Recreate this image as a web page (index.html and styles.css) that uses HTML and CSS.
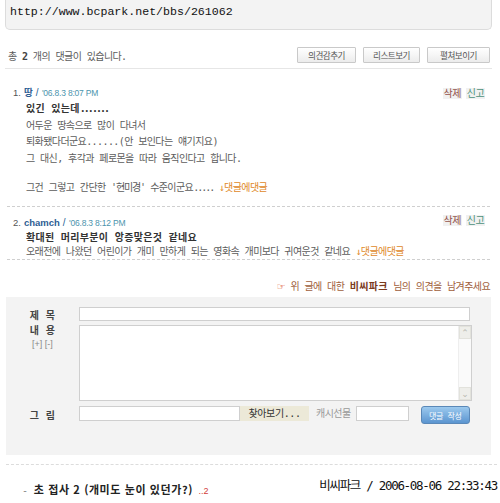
FILE: index.html
```html
<!DOCTYPE html>
<html lang="ko">
<head>
  <meta charset="UTF-8" />
  <title>댓글</title>
  <link rel="stylesheet" href="styles.css">
</head>
<body>
  <!-- 글 주소 -->
  <div class="urlbox">http://www.bcpark.net/bbs/261062</div>

  <div class="toolbar">
    <p class="count">총 <b>2</b> 개의 댓글이 있습니다.</p>
    <div class="btns">
      <button class="btn">의견감추기</button>
      <button class="btn">리스트보기</button>
      <button class="btn">펼쳐보이기</button>
    </div>
  </div>

  <ul class="comments">
    <li class="comment first">
      <div class="c-head">
        <span class="num">1.</span>
        <b class="nick">땅</b>
        <span class="slash">/</span>
        <span class="date">'06.8.3 8:07 PM</span>
        <span class="tools"><a class="del">삭제</a><a class="rep">신고</a></span>
      </div>
      <div class="c-body">
        <p class="c-title">있긴 있는데<span class="dots">.......</span></p>
        <p>어두운 땅속으로 많이 다녀서</p>
        <p>퇴화됐다더군요......(안 보인다는 얘기지요)</p>
        <p>그 대신, 후각과 페로몬을 따라 움직인다고 합니다.</p>
        <p class="blank"></p>
        <p>그건 그렇고 간단한 <span class="quote">'현미경'</span> 수준이군요<span class="dots">.....</span> <a class="reply">↓댓글에댓글</a></p>
      </div>
    </li>
    <li class="comment second">
      <div class="c-head">
        <span class="num">2.</span>
        <b class="nick">chamch</b>
        <span class="slash">/</span>
        <span class="date">'06.8.3 8:12 PM</span>
        <span class="tools"><a class="del">삭제</a><a class="rep">신고</a></span>
      </div>
      <div class="c-body">
        <p class="c-title">확대된 머리부분이 앙증맞은것 같네요</p>
        <p>오래전에 나왔던 어린이가 개미 만하게 되는 영화속 개미보다 귀여운것 같네요 <a class="reply">↓댓글에댓글</a></p>
      </div>
    </li>
  </ul>

  <p class="prompt"><span class="hand">☞</span> 위 글에 대한 <b>비씨파크</b> 님의 의견을 남겨주세요</p>

  <form class="write">
    <label class="lbl">제 목</label>
    <div class="field"><input type="text" class="in-title"></div>

    <label class="lbl lbl-top">내 용<span class="resize">[+] [-]</span></label>
    <div class="field">
      <div class="area">
        <div class="area-text"></div>
        <div class="scroll">
          <span class="arrow">&#8963;</span>
          <span class="arrow">&#8964;</span>
        </div>
      </div>
    </div>

    <label class="lbl">그 림</label>
    <div class="field file-row">
      <input type="text" class="in-file">
      <span class="browse">찾아보기...</span>
      <span class="gift">캐시선물</span>
      <input type="text" class="in-gift">
      <button type="button" class="submit">댓글 작성</button>
    </div>
  </form>

  <div class="related">
    <p class="rel-title"><span class="dash">-</span> <b>초 접사 2 (개미도 눈이 있던가?)</b> <span class="cnt">..2</span></p>
    <span class="stamp">비씨파크 / 2006-08-06 22:33:43</span>
  </div>
</body>
</html>
```

FILE: styles.css
```css
:root {
  --ko: "DejaVu Sans Mono", "Noto Sans CJK KR", sans-serif;
  --lat: "Liberation Sans", "Noto Sans CJK KR", sans-serif;
  --text: #5c5c5c;
  --dark: #333;
  --line: #e6e6e6;
  --blue: #2d5d93;
  --box: #f3f3f3;
}

* {
  box-sizing: border-box;
  margin: 0;
  padding: 0;
}

body {
  width: 500px;
  height: 503px;
  overflow: hidden;
  background: #fff;
  font-family: var(--ko);
  font-size: 10px;
  letter-spacing: -0.6px;
  color: var(--text);
  white-space: nowrap;
}

a { cursor: pointer; }

/* 글 주소 박스 */
.urlbox {
  margin: 0 8px 0 5px;
  height: 30px;
  padding: 4px 0 0 4px;
  line-height: 16px;
  background: var(--box);
  border: 1px solid #dcdcdc;
  border-top: none;
  border-radius: 0 0 5px 5px;
  font-family: "Liberation Mono", monospace;
  font-size: 11.6px;
  letter-spacing: 0;
  color: #111;
}

.toolbar {
  display: flex;
  justify-content: space-between;
  align-items: flex-end;
  margin: 17px 8px 0 5px;
  padding: 0 2px 5px 3px;
  border-bottom: 1px solid var(--line);
}

.count {
  line-height: 14px;
  margin-bottom: -1px;
}

.count b { color: #444; }

.btns {
  display: flex;
  gap: 7px;
}

.btn {
  height: 16px;
  padding: 0;
  font-family: var(--ko);
  font-size: 8.6px;
  letter-spacing: -0.5px;
  white-space: nowrap;
  color: #555;
  background: linear-gradient(#ffffff, #ececec);
  border: 1px solid #c9c9c9;
  border-radius: 1px;
}

.btn:nth-child(1) { width: 59px; }
.btn:nth-child(2) { width: 57px; }
.btn:nth-child(3) { width: 63px; }

/* 댓글 목록 */
.comments {
  list-style: none;
  margin: 0 10px 0 7px;
}

.comment { border-bottom: 1px dashed #cfcfcf; }
.comment.first { padding: 16px 0 10px 6px; }
.comment.second { padding: 8px 0 0 6px; }

.c-head {
  display: flex;
  align-items: center;
  gap: 3px;
  height: 16px;
  line-height: 16px;
}

.num {
  color: #555;
  font-family: var(--lat);
  font-size: 9.5px;
  letter-spacing: 0;
}

.nick {
  color: var(--blue);
  font-family: var(--lat);
  font-size: 9.5px;
  letter-spacing: 0;
}

.slash {
  color: var(--blue);
  font-family: var(--lat);
  font-size: 10px;
}

.date {
  color: #4b94ad;
  font-family: var(--lat);
  font-size: 8.5px;
  letter-spacing: -0.2px;
  margin-left: 1px;
}

.tools {
  margin-left: auto;
  display: flex;
  gap: 4px;
  margin-right: 5px;
}

.tools a {
  padding: 0 1px;
  background: #f1f1f1;
  line-height: 11px;
}

.comment.second .tools { margin-top: -5px; }

.del { color: #93534c; }
.rep { color: #4d927a; }

.c-body { padding-left: 13px; }

.first .c-body p { line-height: 16.5px; }
.first .c-body .blank { height: 12.5px; }
.second .c-body p { line-height: 14px; }

.c-title {
  font-weight: bold;
  color: var(--dark);
  letter-spacing: 0.3px;
}

.dots { letter-spacing: -2px; }
.quote { letter-spacing: -1.2px; }

.reply { color: #e0892a; }

.prompt {
  margin: 19px 10px 2px 0;
  text-align: right;
  line-height: 16px;
  color: #a0603c;
}

.prompt b { color: #7a3a1c; letter-spacing: 0.3px; }

.hand {
  color: #e0592a;
  font-family: "DejaVu Sans", sans-serif;
  font-size: 10px;
}

/* 의견 쓰기 폼 */
.write {
  display: grid;
  grid-template-columns: 73px 391px;
  row-gap: 3px;
  margin: 0 9px 0 6px;
  padding: 10px 0 31px;
  background: var(--box);
}

.lbl {
  display: flex;
  flex-direction: column;
  align-items: center;
  justify-content: center;
  font-weight: bold;
  color: #444;
  letter-spacing: 0.3px;
}

.lbl-top {
  justify-content: flex-start;
  line-height: 12px;
}

.resize {
  font-weight: normal;
  font-family: var(--lat);
  color: #888;
  font-size: 9px;
  letter-spacing: 0;
  margin-top: 1px;
}

.field input {
  height: 15px;
  border: 1px solid #cfcfcf;
  background: #fff;
  outline: none;
}

.in-title { width: 391px; height: 14px !important; }

.area {
  display: flex;
  width: 393px;
  height: 76px;
  background: #fff;
  border: 1px solid #cfcfcf;
}

.area-text { flex: 1; }

.scroll {
  width: 13px;
  display: flex;
  flex-direction: column;
  justify-content: space-between;
  background: #fafafa;
  border-left: 1px solid #eee;
}

.arrow {
  height: 13px;
  background: #eeeeea;
  border: 1px solid #e2e2dc;
  color: #b8b8b0;
  font-family: "DejaVu Sans", sans-serif;
  font-size: 9px;
  letter-spacing: 0;
  line-height: 12px;
  text-align: center;
}

.file-row {
  display: flex;
  align-items: flex-start;
  margin-top: 2px;
  height: 18px;
}

.in-file { width: 161px; }

.browse {
  width: 70px;
  height: 15px;
  line-height: 15px;
  background: #ece9d8;
  color: #333;
  font-size: 10px;
  letter-spacing: -0.4px;
  text-align: center;
}

.gift {
  width: 40px;
  margin-left: 7px;
  line-height: 15px;
  color: #999;
}

.in-gift { width: 53px; }

.submit {
  width: 50px;
  height: 18px;
  margin-left: 12px;
  font-family: var(--ko);
  font-size: 8px;
  letter-spacing: -0.3px;
  white-space: nowrap;
  color: #fff;
  background: linear-gradient(#9cc9ee, #5b95d0);
  border: 1px solid #5a88b8;
  border-radius: 3px;
}

.related {
  display: flex;
  justify-content: space-between;
  align-items: flex-start;
  margin: 9px 3px 0 6px;
  padding: 16px 0 0 16px;
  border-top: 1px dashed #dcdcdc;
  line-height: 16px;
}

.rel-title b {
  color: #222;
  font-family: "Noto Sans CJK KR", sans-serif;
  font-size: 11px;
  letter-spacing: 0.6px;
}

.dash { color: #888; margin-right: 1px; }

.cnt {
  color: #d23c3c;
  font-family: var(--lat);
  font-size: 9px;
  letter-spacing: 0;
}

.stamp {
  font-family: "DejaVu Sans Mono", "Noto Sans CJK KR", monospace;
  font-size: 12.5px;
  letter-spacing: -1.3px;
  color: #111;
  margin-top: -3px;
}
```
